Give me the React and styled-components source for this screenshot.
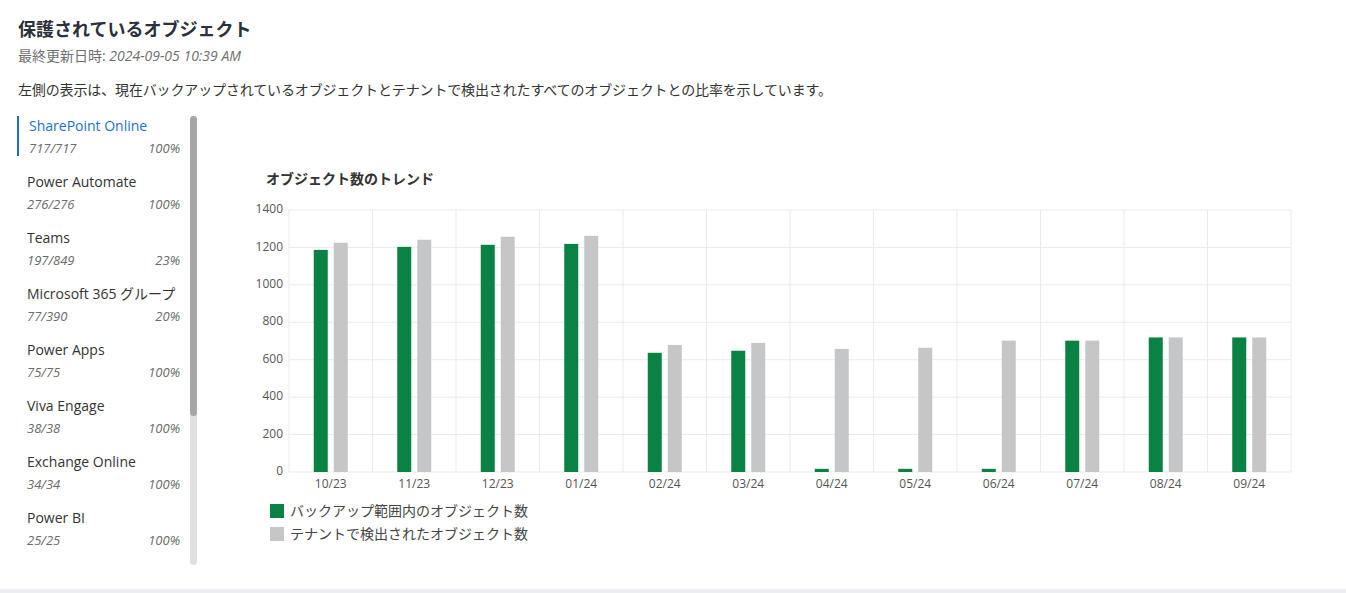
import styled, { createGlobalStyle } from "styled-components";

const GlobalStyle = createGlobalStyle`
  html, body {
    margin: 0;
    padding: 0;
    background: #eceef1;
  }
  body {
    font-family: "Open Sans", "Noto Sans CJK JP", sans-serif;
    color: #333333;
  }
`;

const services = [
  { name: "SharePoint Online", count: "717/717", pct: "100%" },
  { name: "Power Automate", count: "276/276", pct: "100%" },
  { name: "Teams", count: "197/849", pct: "23%" },
  { name: "Microsoft 365 グループ", count: "77/390", pct: "20%" },
  { name: "Power Apps", count: "75/75", pct: "100%" },
  { name: "Viva Engage", count: "38/38", pct: "100%" },
  { name: "Exchange Online", count: "34/34", pct: "100%" },
  { name: "Power BI", count: "25/25", pct: "100%" },
];

const months = ["10/23", "11/23", "12/23", "01/24", "02/24", "03/24", "04/24", "05/24", "06/24", "07/24", "08/24", "09/24"];
const backedUp = [1187, 1203, 1214, 1219, 637, 648, 17, 17, 17, 702, 719, 719];
const detected = [1225, 1241, 1257, 1262, 679, 690, 658, 664, 702, 702, 719, 719];

const GREEN = "#0a8243";
const GRAY = "#c5c6c8";

function TrendChart() {
  const x0 = 49;
  const x1 = 1051;
  const y0 = 9;
  const y1 = 271;
  const step = (x1 - x0) / months.length;
  const scale = (y1 - y0) / 1400;
  const ticks = [0, 200, 400, 600, 800, 1000, 1200, 1400];

  return (
    <ChartSvg width="1060" height="295" viewBox="0 0 1060 295">
      {ticks.map((t) => {
        const y = y1 - t * scale;
        return (
          <g key={t}>
            <line x1={x0} x2={x1} y1={y} y2={y} stroke="#ebebeb" strokeWidth="1" />
            <text x="43" y={y} textAnchor="end" dominantBaseline="middle" fontSize="12" fill="#555">
              {t}
            </text>
          </g>
        );
      })}
      {months.map((_, i) => (
        <line key={i} x1={x0 + step * i} x2={x0 + step * i} y1={y0} y2={y1} stroke="#ebebeb" strokeWidth="1" />
      ))}
      <line x1={x1} x2={x1} y1={y0} y2={y1} stroke="#ebebeb" strokeWidth="1" />
      {months.map((m, i) => {
        const cx = x0 + step * (i + 0.5);
        const hg = backedUp[i] * scale;
        const hd = detected[i] * scale;
        return (
          <g key={m}>
            <rect x={cx - 17} y={y1 - hg} width="14" height={hg} fill={GREEN} />
            <rect x={cx + 3} y={y1 - hd} width="14" height={hd} fill={GRAY} />
            <text x={cx} y="284" textAnchor="middle" dominantBaseline="middle" fontSize="12" fill="#555">
              {m}
            </text>
          </g>
        );
      })}
    </ChartSvg>
  );
}

export default function App() {
  return (
    <>
      <GlobalStyle />
      <Card>
        <Title>保護されているオブジェクト</Title>
        <Updated>
          最終更新日時: <em>2024-09-05 10:39 AM</em>
        </Updated>
        <Description>
          左側の表示は、現在バックアップされているオブジェクトとテナントで検出されたすべてのオブジェクトとの比率を示しています。
        </Description>
        <Body>
          <Sidebar>
            <ServiceList>
              {services.map((s, i) => (
                <ServiceItem key={s.name} $active={i === 0}>
                  <ServiceName $active={i === 0}>{s.name}</ServiceName>
                  <ServiceStats>
                    <span>{s.count}</span>
                    <span>{s.pct}</span>
                  </ServiceStats>
                </ServiceItem>
              ))}
            </ServiceList>
            <ScrollTrack>
              <ScrollThumb />
            </ScrollTrack>
          </Sidebar>
          <ChartPanel>
            <ChartTitle>オブジェクト数のトレンド</ChartTitle>
            <TrendChart />
            <Legend>
              <LegendRow>
                <Swatch $color={GREEN} />
                バックアップ範囲内のオブジェクト数
              </LegendRow>
              <LegendRow>
                <Swatch $color={GRAY} />
                テナントで検出されたオブジェクト数
              </LegendRow>
            </Legend>
          </ChartPanel>
        </Body>
      </Card>
    </>
  );
}

const Card = styled.div`
  background: #ffffff;
  height: 589px;
  box-sizing: border-box;
  padding: 17px 18px 0 17px;
  overflow: hidden;
`;

const Title = styled.h1`
  margin: 0 0 0 1px;
  font-size: 18px;
  line-height: 24px;
  font-weight: 700;
  color: #2b313a;
`;

const Updated = styled.div`
  margin: 5px 0 0 1px;
  font-size: 14px;
  line-height: 20px;
  color: #707070;

  em {
    font-style: italic;
  }
`;

const Description = styled.p`
  margin: 14px 0 0 1px;
  font-size: 14px;
  line-height: 20px;
  letter-spacing: -0.14px;
  color: #333333;
`;

const Body = styled.div`
  display: flex;
  margin-top: 16px;
`;

const Sidebar = styled.div`
  display: flex;
  gap: 10px;
  flex-shrink: 0;
  height: 449px;
`;

const ServiceList = styled.div`
  width: 163px;
  overflow: hidden;
`;

const ScrollTrack = styled.div`
  width: 7px;
  height: 449px;
  background: #e0e0e0;
  border-radius: 4px;
`;

const ScrollThumb = styled.div`
  height: 300px;
  background: #a6a6a6;
  border-radius: 4px;
`;

const ServiceItem = styled.div`
  display: flex;
  flex-direction: column;
  gap: 4px;
  height: 40px;
  margin-bottom: 16px;
  padding-left: ${(p) => (p.$active ? "10px" : "10px")};
  border-left: ${(p) => (p.$active ? "2px solid #1d6ed6" : "none")};
`;

const ServiceName = styled.div`
  font-size: 14px;
  line-height: 20px;
  color: ${(p) => (p.$active ? "#1d6ed6" : "#333333")};
  white-space: nowrap;
`;

const ServiceStats = styled.div`
  display: flex;
  justify-content: space-between;
  font-size: 13px;
  line-height: 16px;
  font-style: italic;
  color: #6a6a6a;
`;

const ChartPanel = styled.div`
  flex: 1;
  padding: 54px 0 0 43px;
`;

const ChartTitle = styled.div`
  margin-left: 26px;
  font-size: 14px;
  line-height: 18px;
  font-weight: 700;
  color: #333333;
`;

const ChartSvg = styled.svg`
  display: block;
  margin-top: 13px;
  font-family: "Open Sans", "Noto Sans CJK JP", sans-serif;
`;

const Legend = styled.div`
  display: flex;
  flex-direction: column;
  gap: 3px;
  margin: 5px 0 0 30px;
`;

const LegendRow = styled.div`
  display: flex;
  align-items: center;
  gap: 6px;
  font-size: 14px;
  line-height: 20px;
  color: #444444;
`;

const Swatch = styled.span`
  width: 14px;
  height: 14px;
  background: ${(p) => p.$color};
`;
